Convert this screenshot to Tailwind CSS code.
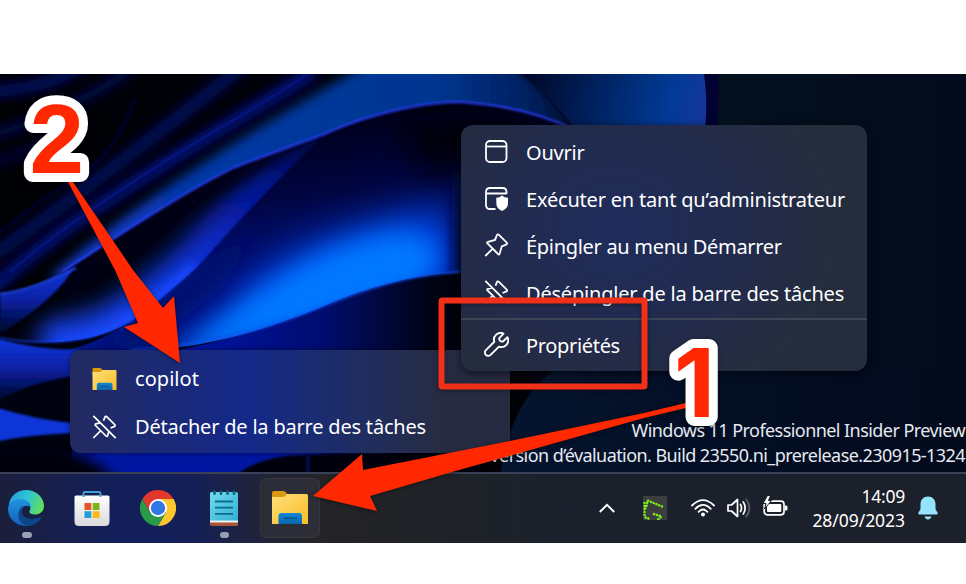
<!DOCTYPE html>
<html lang="fr">
<head>
<meta charset="utf-8">
<title>Bureau Windows 11</title>
<script src="https://cdn.jsdelivr.net/npm/@tailwindcss/browser@4"></script>
</head>
<body class="bg-white">
<!-- shared icons -->
<svg class="absolute size-0" aria-hidden="true">
  <defs>
    <symbol id="pin" viewBox="0 0 24 24"><path d="M14.2 1.6 22 9.4Q23.600 10.800 21.500 11.600L17.300 13.300 15.200 20.600Q14.700 22.200 13.500 21L3 10.500Q1.900 9.300 3.500 8.900L10.500 6.900 12.300 2.400Q13 .7 14.200 1.600ZM8 15.800.8 23"/></symbol>
    <symbol id="unpin" viewBox="0 0 24 24"><path d="M.8.8 23.200 23.200M11 5.800 12.300 2.400Q13 .7 14.200 1.600L22 9.400Q23.600 10.800 21.500 11.600L18 13M8 7.700 3.500 8.900Q1.900 9.300 3 10.500L13.500 21Q14.700 22.200 15.200 20.600L16.300 16.600M8 15.800.8 23"/></symbol>
    <linearGradient id="fy" x1="0" y1="0" x2="1" y2="1"><stop offset="0" stop-color="#ffe07a"/><stop offset="1" stop-color="#f7bd28"/></linearGradient>
    <linearGradient id="fb" x1="0" y1="0" x2="0" y2="1"><stop offset="0" stop-color="#0f86d2"/><stop offset="1" stop-color="#0c66ae"/></linearGradient>
    <symbol id="folder" viewBox="0 0 36 33">
      <path d="M0 2Q0 0 2 0H11Q12.500 0 13.500 1L16 4H32V10H0Z" fill="#d99a0d"/>
      <path d="M0 6H12L15 3H34.500Q36 3 36 4.500V33H0Z" fill="url(#fy)"/>
      <path d="M6.500 33V25Q6.500 22 9.500 22H27Q30 22 30 25V33Z" fill="url(#fb)"/>
      <path d="M12 27.300H25" stroke="#07508f" stroke-width="1.500"/>
    </symbol>
  </defs>
</svg>

<div class="flex h-[584px] w-[966px] flex-col overflow-hidden bg-white pt-[74px] font-['Noto_Sans','Open_Sans',sans-serif] text-white">
  <main class="relative flex h-[469px] flex-col overflow-hidden bg-[#020a1c]">

    <!-- wallpaper -->
    <svg class="absolute inset-0 h-[469px] w-[966px]" viewBox="0 74 966 469">
      <defs>
        <filter id="b1" filterUnits="userSpaceOnUse" x="-50" y="20" width="1060" height="560"><feGaussianBlur stdDeviation="1.200"/></filter>
        <filter id="b5" filterUnits="userSpaceOnUse" x="-50" y="20" width="1060" height="560"><feGaussianBlur stdDeviation="6"/></filter>
        <filter id="b12" filterUnits="userSpaceOnUse" x="-50" y="20" width="1060" height="560"><feGaussianBlur stdDeviation="12"/></filter>
        <filter id="b20" filterUnits="userSpaceOnUse" x="-50" y="20" width="1060" height="560"><feGaussianBlur stdDeviation="20"/></filter>
        <linearGradient id="base" x1="0" x2="1"><stop offset="0" stop-color="#000104"/><stop offset=".5" stop-color="#00010c"/><stop offset=".73" stop-color="#03111f"/><stop offset="1" stop-color="#030a1c"/></linearGradient>
        <linearGradient id="rr" gradientUnits="userSpaceOnUse" x1="60" y1="0" x2="580" y2="0"><stop offset="0" stop-color="#1440d8"/><stop offset=".25" stop-color="#0337a8"/><stop offset=".5" stop-color="#00389a"/><stop offset=".72" stop-color="#003590"/><stop offset=".9" stop-color="#002060"/><stop offset="1" stop-color="#000c30"/></linearGradient>
        <linearGradient id="disc" gradientUnits="userSpaceOnUse" x1="530" y1="80" x2="706" y2="110"><stop offset="0" stop-color="#000a2c"/><stop offset=".5" stop-color="#00296f"/><stop offset=".8" stop-color="#023a96"/><stop offset="1" stop-color="#14379c"/></linearGradient>
        <linearGradient id="nav" gradientUnits="userSpaceOnUse" x1="320" y1="120" x2="335" y2="270"><stop offset="0" stop-color="#00001c"/><stop offset=".5" stop-color="#000542"/><stop offset="1" stop-color="#001688"/></linearGradient>
        <linearGradient id="fs" gradientUnits="userSpaceOnUse" x1="130" y1="320" x2="322" y2="137"><stop offset="0" stop-color="#1242ee"/><stop offset=".35" stop-color="#0d2fd0"/><stop offset=".65" stop-color="#05189a"/><stop offset="1" stop-color="#000848"/></linearGradient>
        <linearGradient id="low" gradientUnits="userSpaceOnUse" x1="200" y1="0" x2="470" y2="0"><stop offset="0" stop-color="#0012a0"/><stop offset=".45" stop-color="#000d70"/><stop offset=".85" stop-color="#000316"/><stop offset="1" stop-color="#000208"/></linearGradient>
        <linearGradient id="br" gradientUnits="userSpaceOnUse" x1="500" y1="0" x2="966" y2="0"><stop offset="0" stop-color="#05152f"/><stop offset=".4" stop-color="#030f26"/><stop offset="1" stop-color="#030a1c"/></linearGradient>
        <linearGradient id="l1" x1="0" y1="0" x2="0" y2="1"><stop offset="0" stop-color="#1238dc"/><stop offset=".45" stop-color="#0a23a8"/><stop offset="1" stop-color="#000424"/></linearGradient>
        <clipPath id="foldc"><path d="M63 272C113 240 170 200 233 168Q280 150 322 135C290 167 260 198 233 227L197 267C180 283 160 300 133 320Q80 352 0 338V290Z"/></clipPath>
        <clipPath id="corec"><path d="M60 352Q100 343 133 320C160 300 180 283 197 267L233 227C260 198 290 167 322 136C372 112 439 98 472 103Q530 108 600 140V272H460C415 275 365 287 322 307C265 330 220 343 160 350Z"/></clipPath>
      </defs>
      <rect x="0" y="74" width="966" height="469" fill="url(#base)"/>
      <!-- faint upper-left folds -->
      <g fill="none" stroke-linecap="round">
        <path d="M-10 92Q50 88 80 66" stroke="#030a66" stroke-width="12" filter="url(#b5)"/>
        <path d="M-10 136Q70 112 130 70" stroke="#020752" stroke-width="9" filter="url(#b5)"/>
        <path d="M-5 162Q40 150 70 130" stroke="#02064c" stroke-width="7" filter="url(#b5)"/>
        <path d="M134 100Q118 150 80 175Q40 200 0 232" stroke="#020438" stroke-width="2.500" filter="url(#b1)"/>
        <path d="M-5 254C70 202 160 132 238 70" stroke="#010b5c" stroke-width="13" filter="url(#b5)"/>
        <path d="M0 247C70 196 160 130 236 72" stroke="#0a1474" stroke-width="1" filter="url(#b1)" opacity=".5"/>
        <path d="M-10 290C60 228 120 192 167 162S260 106 310 74" stroke="#020f78" stroke-width="14" filter="url(#b5)"/>
        <path d="M10 272C60 228 120 190 167 160S260 106 308 74" stroke="#1426a4" stroke-width="1.500" filter="url(#b1)" opacity=".7"/>
      </g>
      <!-- main ribbon -->
      <path d="M50 278C110 225 190 165 350 74L370 60H510C540 90 560 105 576 130L472 115Q400 108 322 145C233 178 150 225 63 284Z" fill="url(#rr)" filter="url(#b5)"/>
      <!-- everything under the ribbon -->
      <path d="M0 300Q40 288 63 272C113 240 170 200 233 168Q280 150 322 135C372 112 439 98 472 103Q530 108 600 140V480H0Z" fill="#000210"/>
      <!-- fold with lit lower rim -->
      <g clip-path="url(#foldc)" fill="none">
        <path d="M330 130C290 167 260 198 233 227L197 267C180 283 160 300 133 320Q100 345 40 348" stroke="url(#fs)" stroke-width="54" filter="url(#b12)"/>
        <path d="M197 267C180 283 160 300 133 320Q100 343 60 350" stroke="#1c4cff" stroke-width="14" filter="url(#b5)"/>
        <path d="M330 120L250 165 150 225 60 290" stroke="#000318" stroke-width="18" filter="url(#b5)" opacity=".9"/>
        <path d="M50 280 0 325" stroke="#000106" stroke-width="30" filter="url(#b12)"/>
      </g>
      <!-- luminous core -->
      <g clip-path="url(#corec)">
        <rect x="50" y="90" width="550" height="270" fill="url(#nav)"/>
        <path d="M165 368C230 310 275 262 335 238S430 210 452 210V290L322 325Z" fill="#0046ea" filter="url(#b20)"/>
        <path d="M160 366C230 315 280 268 345 246S425 234 440 257L420 287 300 327Z" fill="#0078ff" filter="url(#b12)"/>
        <path d="M197 262L133 320 90 348 140 350 220 290 262 230Z" fill="#000a66" filter="url(#b12)" opacity=".8"/>
        <path d="M452 170H480V290H452Z" fill="#000d48" filter="url(#b5)"/>
        <path d="M400 120C450 105 520 110 560 124V170H420Z" fill="#000010" filter="url(#b12)"/>
      </g>
      <path d="M63 271C113 240 170 200 233 168Q280 150 322 135C372 112 439 98 472 103Q530 108 575 130" fill="none" stroke="#2a3cf4" stroke-width="2.500" filter="url(#b1)" opacity=".85"/>
      <path d="M0 338Q80 352 133 320C160 300 180 283 197 267L233 227Q290 167 322 137" fill="none" stroke="url(#fs)" stroke-width="1.500" filter="url(#b1)" opacity=".8"/>
      <!-- lower hollow -->
      <path d="M60 353H160C220 343 265 330 322 307S415 275 460 272L530 272V480H60Z" fill="url(#low)"/>
      <path d="M130 350C220 343 265 330 322 307S415 275 460 272" fill="none" stroke="#1450f0" stroke-width="1.500" filter="url(#b1)"/>
      <!-- bottom-left folds -->
      <path d="M-10 352H72V480H-10Z" fill="#000210"/>
      <path d="M0 294C30 290 50 280 74 268L64 282Q40 310 0 334Z" fill="url(#l1)" filter="url(#b1)"/>
      <path d="M0 294C30 290 50 280 76 268" fill="none" stroke="#2249f0" stroke-width="2" filter="url(#b1)"/>
      <path d="M-5 338Q35 350 80 350V375Q30 382-5 402Z" fill="url(#l1)" filter="url(#b1)"/>
      <path d="M-5 407Q35 420 80 424V433Q30 434-5 442Z" fill="#1034d8" filter="url(#b1)"/>
      <path d="M60 460C150 435 260 440 330 448L270 480H110Z" fill="#0014a0" filter="url(#b5)"/>
      <path d="M-10 450H60Q100 458 120 485H-10Z" fill="#000210" filter="url(#b5)"/>
      <path d="M235 476Q260 456 300 455T480 450V480Z" fill="#000108" filter="url(#b1)"/>
      <path d="M308 455V472" stroke="#040a48" stroke-width="4" filter="url(#b1)"/>
      <!-- right disc -->
      <path d="M522 74H718Q720 100 716 130H576Q550 95 522 74Z" fill="#000030" filter="url(#b1)"/>
      <path d="M522 74H704Q708 100 705 130H576Q550 95 522 74Z" fill="url(#disc)"/>
      <path d="M500 480C505 430 525 388 560 366H966V480Z" fill="url(#br)"/>
    </svg>

    <!-- desktop watermark -->
    <section class="relative flex h-[398px] flex-col items-end justify-end pr-px pb-[4px] text-[18px] leading-[25px] whitespace-nowrap text-[#e6e9f0]">
      <p class="tracking-[-0.56px]">Windows 11 Professionnel Insider Preview</p>
      <p class="tracking-[-0.57px]">Version d’évaluation. Build 23550.ni_prerelease.230915-1324</p>
    </section>

    <!-- jump list -->
    <nav class="absolute top-[276px] left-[70px] flex h-[103px] w-[440px] flex-col rounded-l-[11px] bg-linear-to-r from-[#222a60] via-[#14288a] via-40% to-[#272b42] to-85% pt-[5px] pl-[22px] text-[20px] shadow-[0_0_5px_rgba(0,0,0,.5)]">
      <a class="flex h-[48px] items-center gap-[18px]"><svg class="h-[22px] w-[25px]"><use href="#folder"/></svg><span class="tracking-[0.05px]">copilot</span></a>
      <a class="flex h-[48px] items-center gap-[18px]"><svg class="mb-px h-6 w-[25px] fill-none stroke-white stroke-[1.7]"><use href="#unpin"/></svg><span class="tracking-[-0.2px]">Détacher de la barre des tâches</span></a>
    </nav>

    <!-- context menu -->
    <nav class="absolute top-[51px] left-[461px] flex h-[246px] w-[406px] flex-col rounded-[12px] bg-[radial-gradient(ellipse_230px_190px_at_155px_105px,#1f2c5c,#222b4c_55%,#252d3c)] pt-[4px] text-[20px] whitespace-nowrap shadow-[0_2px_8px_rgba(0,0,0,.6)]">
      <a class="flex h-[47px] items-center gap-[17px] pl-[23px]"><svg class="mb-[2px] h-6 w-[25px] fill-none stroke-white stroke-[1.8]" viewBox="0 0 25 24"><rect x="2" y="1" width="20.500" height="21" rx="4"/><path d="M2 6.500H22.500"/></svg><span class="tracking-[-0.23px]">Ouvrir</span></a>
      <a class="flex h-[47px] items-center gap-[17px] pl-[23px]"><svg class="mb-[2px] h-6 w-[25px] fill-none stroke-white stroke-[1.8]" viewBox="0 0 25 24"><path d="M11.500 22H6Q2 22 2 18V5Q2 1 6 1H18.500Q22.500 1 22.500 5V7M2 6.500H22.500"/><path d="M18 8.500Q20.500 10.800 24 10.800V16Q24 21.500 18 24Q12.300 21.500 12.300 16V10.800Q15.500 10.800 18 8.500Z" fill="#fff" stroke="none"/></svg><span class="tracking-[-0.2px]">Exécuter en tant qu’administrateur</span></a>
      <a class="flex h-[47px] items-center gap-[17px] pl-[23px]"><svg class="mb-[3px] h-6 w-[25px] fill-none stroke-white stroke-[1.8]"><use href="#pin"/></svg><span class="tracking-[-0.3px]">Épingler au menu Démarrer</span></a>
      <a class="flex h-[47px] items-center gap-[17px] pl-[23px]"><svg class="mb-[3px] h-6 w-[25px] fill-none stroke-white stroke-[1.8]"><use href="#unpin"/></svg><span class="tracking-[-0.2px]">Désépingler de la barre des tâches</span></a>
      <hr class="mt-px h-[2px] border-0 bg-[#3c4455]">
      <a class="flex h-[51px] items-center gap-[17px] pl-[23px]"><svg class="mb-[3px] h-[25px] w-[25px] fill-none stroke-white stroke-[1.9] [stroke-linejoin:round]" viewBox="0 0 25 25"><path d="M19.500 1.600A6.700 6.700 0 0 0 10.300 9.800L1.900 18.100A3.300 3.300 0 0 0 6.600 22.900L15 14.600A6.700 6.700 0 0 0 23.400 5.300L18.900 9.500Q17.300 10 16.100 8.800T15.300 6.100Z"/></svg><span class="tracking-[-0.33px]">Propriétés</span></a>
    </nav>

    <!-- taskbar -->
    <footer class="relative flex h-[71px] items-center justify-between border-t-2 border-[#3a4055] bg-[linear-gradient(90deg,#1b1f3c_0,#131f5a_110px,#141f58_190px,#20233c_255px,#242427_320px,#1f2228_440px,#1b212c_560px,#1b202b_100%)] pb-[2px]">
      <div class="-ml-1 flex items-center gap-[6px]">
        <div class="relative flex size-[60px] items-center justify-center">
          <svg class="size-[36px]" viewBox="0 0 36 36">
            <defs>
              <linearGradient id="e1" x1="0" y1=".2" x2="1" y2=".5"><stop offset="0" stop-color="#239de0"/><stop offset=".5" stop-color="#2fc4d4"/><stop offset="1" stop-color="#5fe05c"/></linearGradient>
              <linearGradient id="e2" x1="0" y1="0" x2="0" y2="1"><stop offset="0" stop-color="#2094e0"/><stop offset="1" stop-color="#1260b8"/></linearGradient>
            </defs>
            <path d="M1 14C3 4 11 0 18 0C29 0 36 8 36 16C36 22 31 24.500 27 24.500C23 24.500 20.500 23 21.500 21C24 17 21 11 13 11C7 11 3 14 1 18Z" fill="url(#e1)"/>
            <path d="M0 19C0 13 6 9 12 9C20 9 23.500 14 22.800 18C21 14.500 14 15 13.500 21C13 28 18 34 24 35C21 36.400 17 36.300 14 35.500C6 34 0 27 0 19Z" fill="url(#e2)"/>
            <path d="M13.500 19C12 27 21 32 34 26.500C31 33 24 36 20 36C13 35 9.500 28 10.500 23C11 20 12.500 17 16 15.500Q14 17 13.500 19Z" fill="#0d4586"/>
          </svg>
          <i class="absolute bottom-0 left-[26px] h-[6px] w-[10px] rounded-full bg-[#9ba0b6]"></i>
        </div>
        <div class="flex size-[60px] items-center justify-center">
          <svg class="h-[36px] w-[36px]" viewBox="0 0 36 36">
            <defs><linearGradient id="st" x1="0" y1="0" x2="0" y2="1"><stop offset="0" stop-color="#fff"/><stop offset="1" stop-color="#d9d9dc"/></linearGradient></defs>
            <path d="M.5 7Q.5 5.500 2 5.500H34Q35.500 5.500 35.500 7V31.500Q35.500 36 31 36H5Q.5 36 .5 31.500Z" fill="url(#st)"/>
            <path d="M9.500 7V3.500Q9.500 2 11 2H25Q26.500 2 26.500 3.500V7" fill="none" stroke="#3f9fd0" stroke-width="2"/>
            <path d="M10.500 13H17.300V20H10.500Z" fill="#e8532a"/><path d="M18.700 13H25.500V20H18.700Z" fill="#7fb315"/><path d="M10.500 21.200H17.300V28H10.500Z" fill="#1f9ddb"/><path d="M18.700 21.200H25.500V28H18.700Z" fill="#fdb913"/>
          </svg>
        </div>
        <div class="flex size-[60px] items-center justify-center">
          <svg class="size-[36px]" viewBox="0 0 36 36">
            <path d="M2.410 9A18 18 0 0 1 33.590 9H18L10.200 22.500Z" fill="#e2392c"/>
            <path d="M33.590 9A18 18 0 0 1 18 36L25.800 22.500 18 9Z" fill="#fcc62d"/>
            <path d="M18 36A18 18 0 0 1 2.410 9L10.200 22.500H25.800Z" fill="#2b9a46"/>
            <circle cx="18" cy="18" r="9" fill="#fff"/><circle cx="18" cy="18" r="7.200" fill="#2f78e6"/>
          </svg>
        </div>
        <div class="relative flex size-[60px] items-center justify-center">
          <svg class="h-[36px] w-[28px]" viewBox="0 0 28 36">
            <defs><linearGradient id="np" x1="0" y1="0" x2="1" y2="1"><stop offset="0" stop-color="#6fdcee"/><stop offset="1" stop-color="#35afd4"/></linearGradient></defs>
            <path d="M0 28H28V34.500Q28 36 26.500 36H1.500Q0 36 0 34.500Z" fill="#a85535"/>
            <path d="M0 29H28V32.500H0Z" fill="#eef2f4"/>
            <path d="M0 3.500Q0 2 1.500 2H26.500Q28 2 28 3.500V30.500H0Z" fill="url(#np)"/>
            <path d="M5 11.500H23M5 17.700H23M5 23.900H23" stroke="#0c6b90" stroke-width="1.800"/>
            <path d="M4.500 1.500V3.800M11 1.500V3.800M17.500 1.500V3.800M24 1.500V3.800" stroke="#126080" stroke-width="2.600" stroke-linecap="round"/>
          </svg>
          <i class="absolute bottom-0 left-[26px] h-[6px] w-[9px] rounded-full bg-[#9ba0b0]"></i>
        </div>
        <div class="flex size-[60px] items-center justify-center rounded-[6px] border border-[#35363f] bg-[#2c2d37]">
          <svg class="h-[33px] w-[36px]"><use href="#folder"/></svg>
        </div>
      </div>

      <div class="flex items-center pr-[28px]">
        <svg class="mr-[28px] h-[10px] w-[16px] fill-none stroke-white stroke-2" viewBox="0 0 16 10"><path d="M.8 9 8 1.800 15.200 9"/></svg>
        <svg class="mr-[24px] size-6" viewBox="0 0 24 24"><path d="M0 0H24V24H0Z" fill="#3c3d3d"/><path d="M19 10.500 4.500 4.500 3.500 10 2 13M1.500 7V20L3.500 22.500H8M11 18 18.500 20.500 15 23.500" fill="none" stroke="#7df01a" stroke-width="2.500" stroke-linecap="round" stroke-dasharray=".1 2.900"/></svg>
        <svg class="mr-[12px] h-[18px] w-[24px] fill-none stroke-white stroke-[1.8] [stroke-linecap:round]" viewBox="0 0 24 18"><path d="M1 6.500Q12-4.300 23 6.500M4.300 9.800Q12 1.900 19.700 9.800M7.600 12.800Q12 8.200 16.400 12.800"/><circle cx="12" cy="15.500" r="2" fill="#fff" stroke="none"/></svg>
        <svg class="mr-[12px] h-[20px] w-[24px] fill-none stroke-white stroke-[1.7] [stroke-linecap:round] [stroke-linejoin:round]" viewBox="0 0 24 20"><path d="M1 7H4.500L10.500 1.500V18.500L4.500 13H1ZM13.500 6.500Q15.500 10 13.500 13.500M16.300 4Q20 10 16.300 16"/><path d="M19.300 1.500Q25.500 10 19.300 18.500" stroke="#5b606b"/></svg>
        <svg class="mr-[24px] mb-[3px] h-[21px] w-[25px] overflow-visible" viewBox="0 0 25 21"><rect x="1.200" y="5.200" width="19.800" height="13.600" rx="3" fill="none" stroke="#fff" stroke-width="1.700"/><rect x="4" y="8" width="14.300" height="8" rx="1" fill="#fff"/><path d="M22 9.500H23Q24.500 9.500 24.500 11V13Q24.500 14.500 23 14.500H22Z" fill="#fff"/><path d="M4.500-.5 0 7.500H3L1.500 13 8.500 4.500H5.500L7.500-.5Z" fill="#fff" stroke="#1b202b" stroke-width="1"/></svg>
        <div class="mr-[13px] text-right text-[17.500px] leading-[24px]"><p class="tracking-[-0.25px]">14:09</p><p class="tracking-[-0.05px]">28/09/2023</p></div>
        <svg class="h-[24px] w-[20px]" viewBox="0 0 20 24"><path d="M10 .5C5.500.5 2.500 4 2.500 8V13L.3 17Q0 18.500 1.500 18.500H18.500Q20 18.500 19.700 17L17.500 13V8C17.500 4 14.500.5 10 .5ZM6.500 20.500Q7.500 23.500 10 23.500T13.500 20.500Z" fill="#93e4fc"/></svg>
      </div>
    </footer>

    <!-- annotations -->
    <svg class="absolute inset-0 h-[469px] w-[966px] drop-shadow-[0_1px_2px_rgba(0,0,0,.4)]" viewBox="0 74 966 469">
      <rect x="441.500" y="300.500" width="203" height="86" rx="1" fill="none" stroke="#f03018" stroke-width="6"/>
      <path d="M68 182 73 182 133 270 163 308 174 296 180 363 124 327 138 323 115 270Z" fill="#ff2800"/>
      <path d="M690 402V407L644 418 459 470 370 496 377 511 313 496 362 454 363 470 510 441 644 413Z" fill="#ff2800"/>
      <g fill="#ff2800" stroke="#fff" stroke-width="18" stroke-linejoin="round" paint-order="stroke" font-weight="700">
        <text x="29.500" y="172.500" font-size="98" font-family="Liberation Sans, sans-serif">2</text>
        <text x="674" y="416.500" font-size="95" font-family="Inter, sans-serif">1</text>
      </g>
    </svg>
  </main>
</div>
</body>
</html>
